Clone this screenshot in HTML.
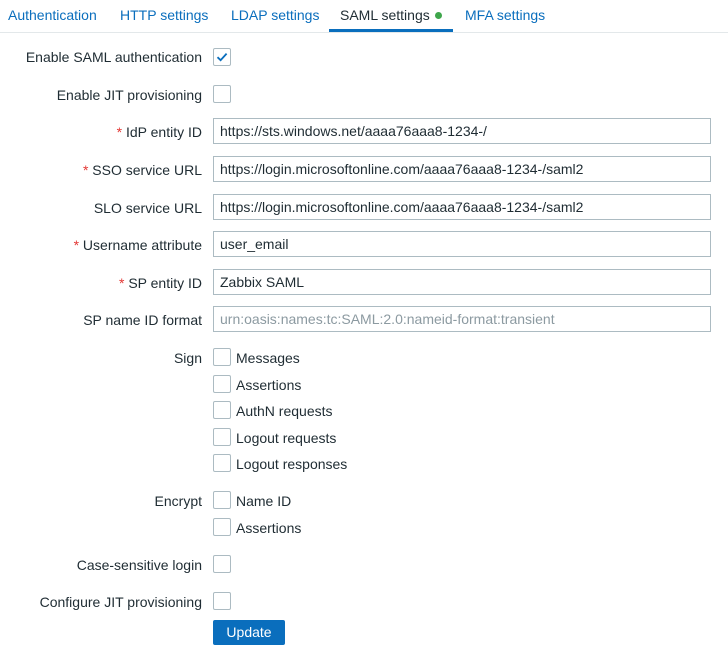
<!DOCTYPE html>
<html><head><style>
body{margin:0;width:728px;height:657px;background:#fff;font-family:"Liberation Sans",Arial,sans-serif;font-size:14px;color:#1f2c33;position:relative;overflow:hidden}
.a{position:absolute}
.tab{position:absolute;top:7px;color:#0a6ebd;font-size:14px;line-height:16px}
.lbl{position:absolute;right:526px;line-height:16px;white-space:nowrap;text-align:right}
.req{color:#e33734}
.cb{position:absolute;left:213px;width:16px;height:16px;border:1px solid #acbbc2;border-radius:2px;background:#fff}
.inp{position:absolute;left:213px;width:490px;height:24px;border:1px solid #acbbc2;line-height:24px;padding-left:6px;color:#1f2c33;box-sizing:content-box}
.opt{position:absolute;left:236px;line-height:16px}
</style></head><body>
<div class="tab" style="left:8px">Authentication</div>
<div class="tab" style="left:120px">HTTP settings</div>
<div class="tab" style="left:231px">LDAP settings</div>
<div class="tab" style="left:340px;color:#1f2c33">SAML settings</div>
<div class="a" style="left:435px;top:12px;width:7px;height:7px;border-radius:50%;background:#3ea64b"></div>
<div class="tab" style="left:465px">MFA settings</div>
<div class="a" style="left:0;top:32px;width:728px;height:1px;background:#e3e8ea"></div>
<div class="a" style="left:329px;top:29px;width:124px;height:3px;background:#0a6ebd"></div>

<div class="lbl" style="top:49px">Enable SAML authentication</div>
<div class="cb" style="top:48px"><svg width="16" height="16" viewBox="0 0 16 16" style="position:absolute;left:0;top:0"><path d="M3.5 8.2 L6.6 11.2 L12.6 4.6" fill="none" stroke="#0a6ebd" stroke-width="1.8"/></svg></div>
<div class="lbl" style="top:87px">Enable JIT provisioning</div>
<div class="cb" style="top:85px"></div>

<div class="lbl" style="top:124px"><span class="req">*</span> IdP entity ID</div>
<div class="inp" style="top:118px">https://sts.windows.net/aaaa76aaa8-1234-/</div>
<div class="lbl" style="top:162px"><span class="req">*</span> SSO service URL</div>
<div class="inp" style="top:156px">https://login.microsoftonline.com/aaaa76aaa8-1234-/saml2</div>
<div class="lbl" style="top:200px">SLO service URL</div>
<div class="inp" style="top:194px">https://login.microsoftonline.com/aaaa76aaa8-1234-/saml2</div>
<div class="lbl" style="top:237px"><span class="req">*</span> Username attribute</div>
<div class="inp" style="top:231px">user_email</div>
<div class="lbl" style="top:275px"><span class="req">*</span> SP entity ID</div>
<div class="inp" style="top:269px">Zabbix SAML</div>
<div class="lbl" style="top:312px">SP name ID format</div>
<div class="inp" style="top:306px;color:#8c9aa1">urn:oasis:names:tc:SAML:2.0:nameid-format:transient</div>

<div class="lbl" style="top:350px">Sign</div>
<div class="cb" style="top:348px"></div><div class="opt" style="top:350px">Messages</div>
<div class="cb" style="top:375px"></div><div class="opt" style="top:377px">Assertions</div>
<div class="cb" style="top:401px"></div><div class="opt" style="top:403px">AuthN requests</div>
<div class="cb" style="top:428px"></div><div class="opt" style="top:430px">Logout requests</div>
<div class="cb" style="top:454px"></div><div class="opt" style="top:456px">Logout responses</div>

<div class="lbl" style="top:493px">Encrypt</div>
<div class="cb" style="top:491px"></div><div class="opt" style="top:493px">Name ID</div>
<div class="cb" style="top:518px"></div><div class="opt" style="top:520px">Assertions</div>

<div class="lbl" style="top:557px">Case-sensitive login</div>
<div class="cb" style="top:555px"></div>
<div class="lbl" style="top:594px">Configure JIT provisioning</div>
<div class="cb" style="top:592px"></div>

<div class="a" style="left:213px;top:620px;width:72px;height:25px;background:#0a6ebd;border-radius:2px;color:#fff;text-align:center;line-height:25px">Update</div>
</body></html>
